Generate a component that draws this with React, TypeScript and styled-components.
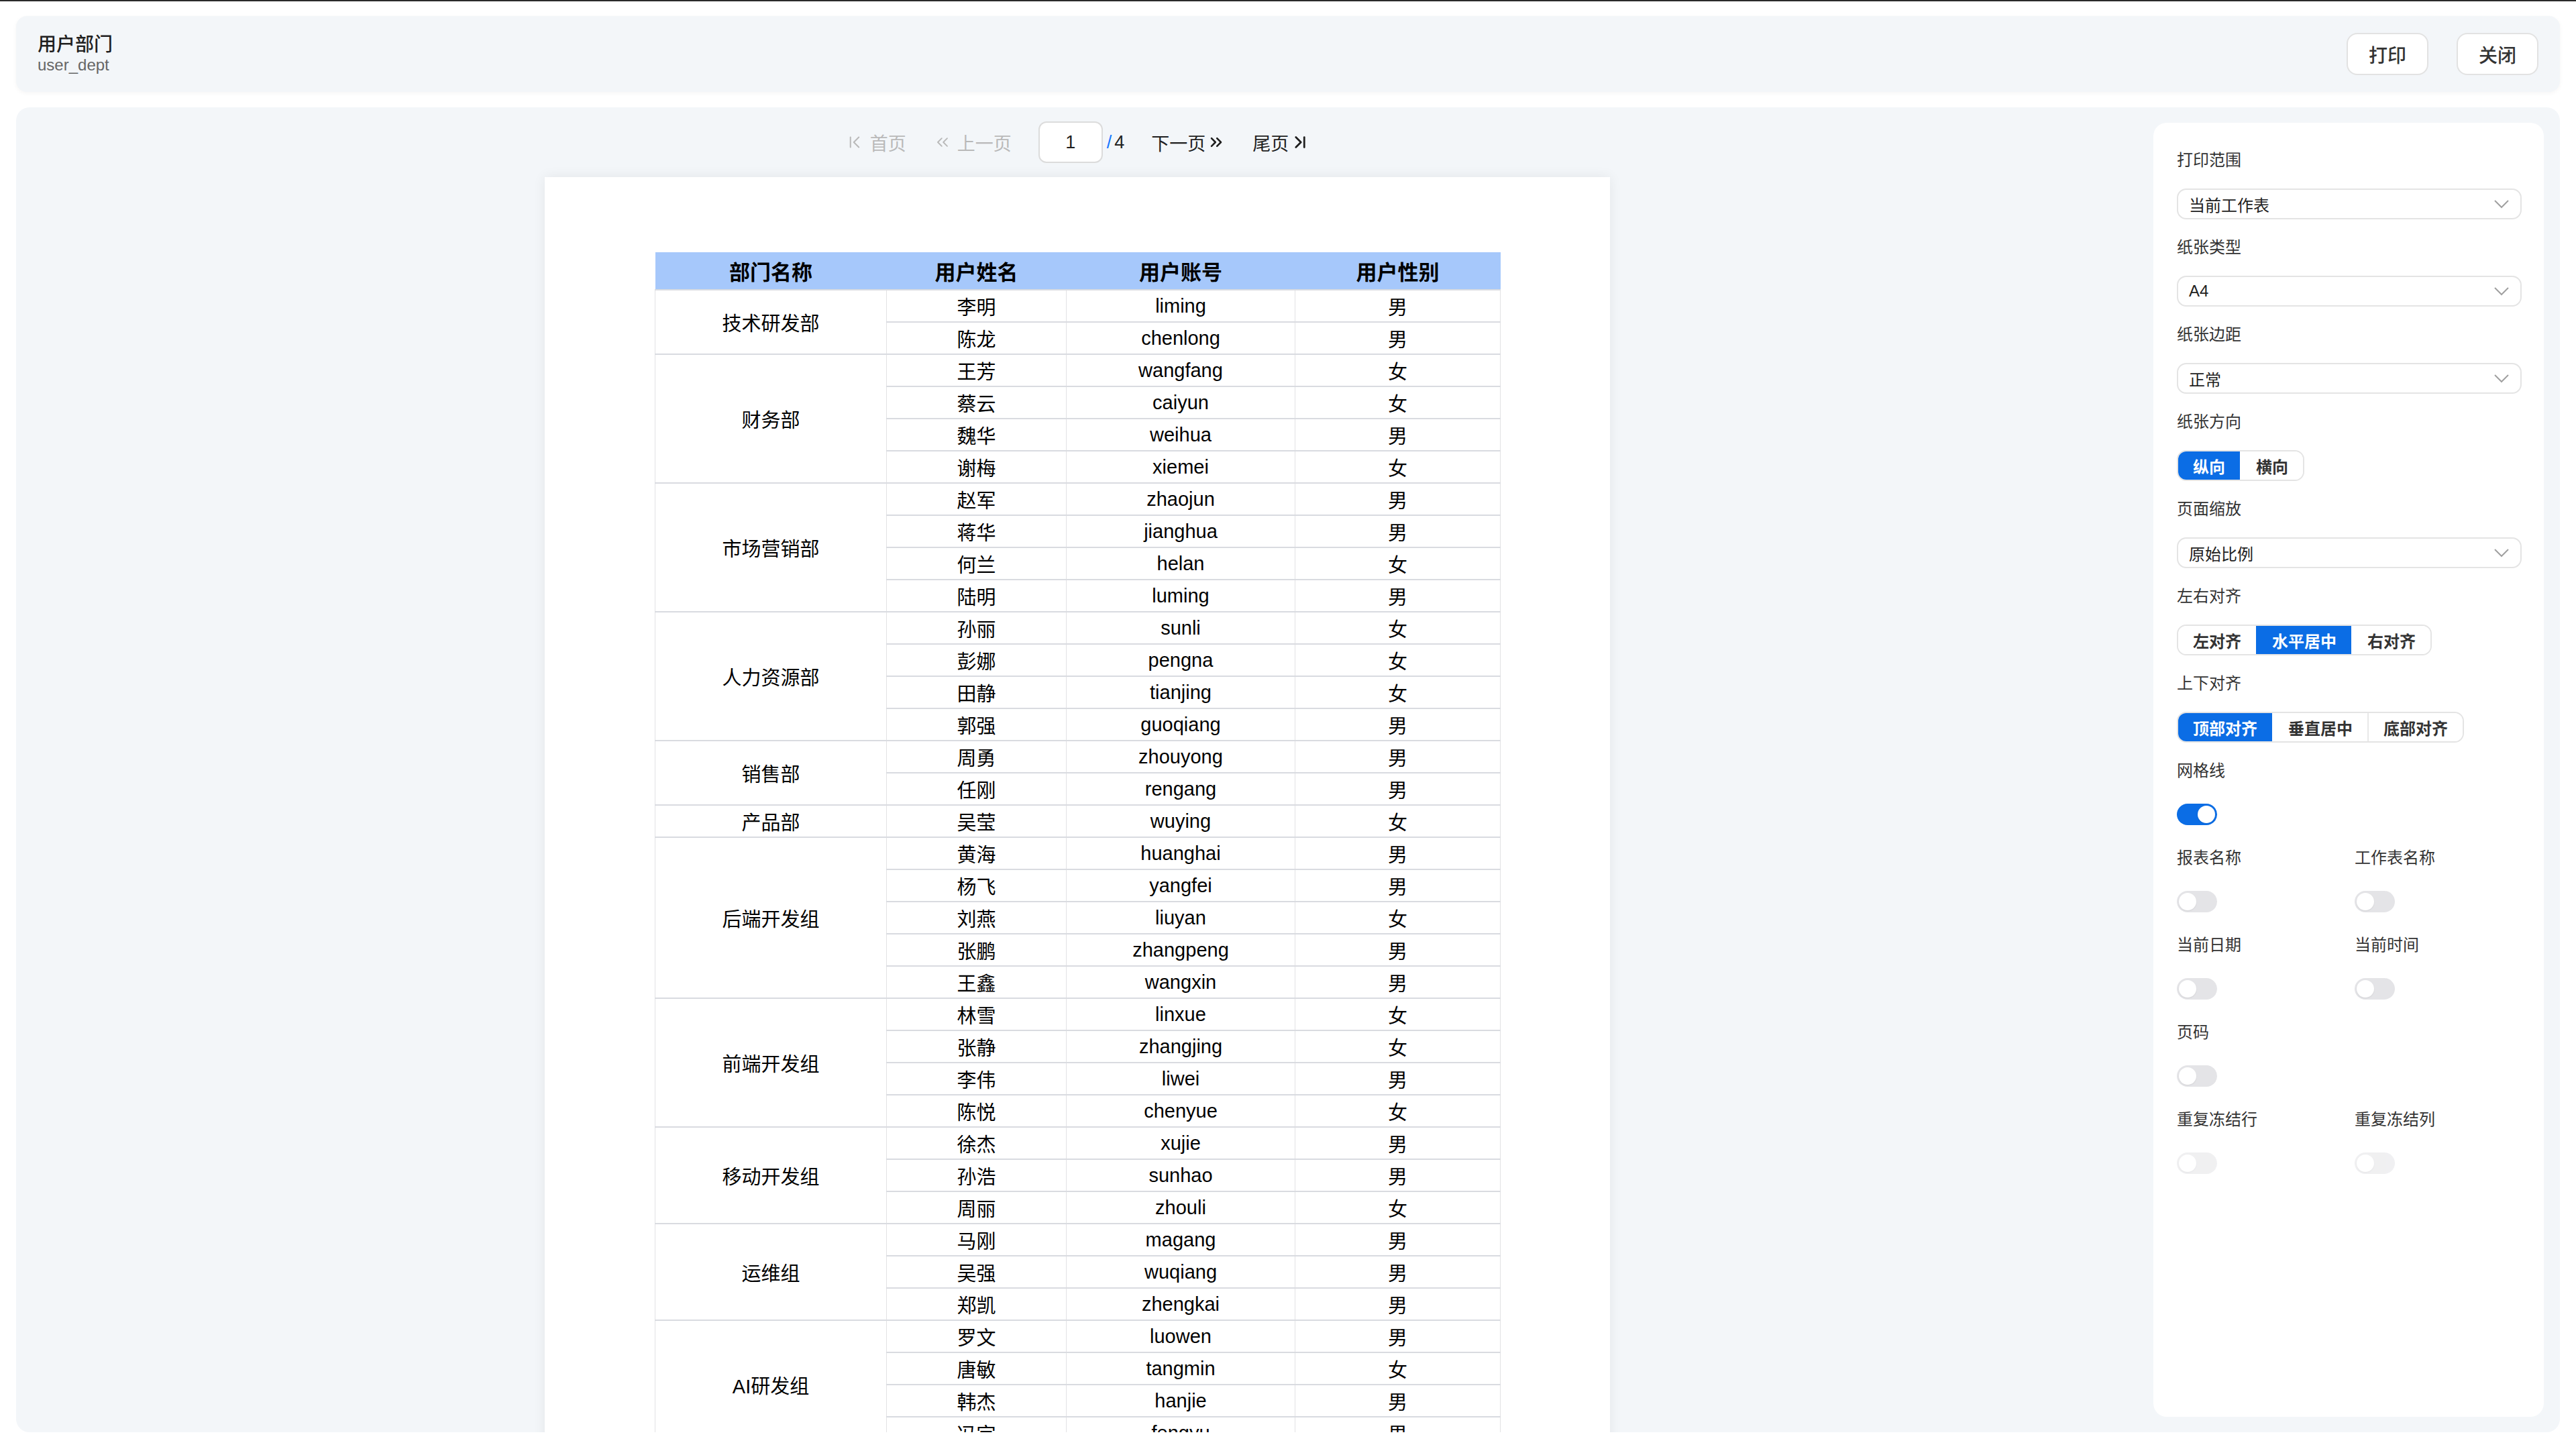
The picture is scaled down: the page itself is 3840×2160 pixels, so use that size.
import React from 'react';
import styled, { createGlobalStyle } from 'styled-components';
import { ChevronFirst, ChevronsLeft, ChevronsRight, ChevronLast } from 'lucide-react';

const GlobalStyle = createGlobalStyle`
  html, body {
    margin: 0;
    padding: 0;
    background: #fff;
  }
  body {
    font-family: "Liberation Sans", "Noto Sans CJK SC", sans-serif;
    color: #222;
  }
  * {
    box-sizing: border-box;
  }
`;

const BLUE = '#0b6de5';

const Page = styled.div`
  height: 2160px;
  border-top: 2px solid #2a2a2a;
  padding: 22px 24px 25px;
  display: flex;
  flex-direction: column;
  gap: 23px;
  overflow: hidden;
`;

const Header = styled.header`
  height: 113px;
  flex-shrink: 0;
  display: flex;
  align-items: center;
  justify-content: space-between;
  padding: 0 32px;
  background: #f3f6f9;
  border-radius: 16px;
  box-shadow: 0 2px 6px rgba(0, 0, 0, 0.04);
`;

const TitleBlock = styled.div`
  display: flex;
  flex-direction: column;
`;

const Title = styled.div`
  font-size: 28px;
  line-height: 33px;
  font-weight: 500;
  color: #1f1f1f;
`;

const SubTitle = styled.div`
  font-size: 24px;
  line-height: 28px;
  color: #666;
`;

const HeaderActions = styled.div`
  display: flex;
  gap: 42px;
`;

const HeaderButton = styled.button`
  height: 63px;
  padding: 0 31px;
  border: 2px solid #e2e2e2;
  border-radius: 16px;
  background: #fff;
  font-family: inherit;
  font-size: 28px;
  font-weight: 500;
  color: #333;
  cursor: pointer;
`;

const Main = styled.main`
  flex: 1;
  min-height: 0;
  display: flex;
  background: #f3f6f9;
  border-radius: 20px;
  overflow: hidden;
`;

const Preview = styled.section`
  flex: 1;
  min-width: 0;
  display: flex;
  flex-direction: column;
  align-items: center;
  overflow: hidden;
`;

const Pager = styled.div`
  display: flex;
  align-items: center;
  gap: 40px;
  padding: 21px 0;
  font-size: 27px;
`;

const PagerLink = styled.span<{ $disabled?: boolean; $tight?: boolean }>`
  display: flex;
  align-items: center;
  gap: ${(p) => (p.$tight ? '2px' : '8px')};
  color: ${(p) => (p.$disabled ? '#b9b9b9' : '#1f1f1f')};
  cursor: ${(p) => (p.$disabled ? 'default' : 'pointer')};
`;

const PageJump = styled.div`
  display: flex;
  align-items: center;
  gap: 6px;
`;

const PageInput = styled.div`
  width: 96px;
  height: 62px;
  border: 2px solid #dcdcdc;
  border-radius: 12px;
  background: #fff;
  display: flex;
  align-items: center;
  justify-content: center;
  color: #1f1f1f;
`;

const Slash = styled.span`
  color: #1677ff;
  margin-right: 4px;
`;

const Paper = styled.div`
  width: 1588px;
  min-height: 2246px;
  flex-shrink: 0;
  background: #fff;
  padding: 112px 164px;
  box-shadow: 0 0 18px rgba(0, 0, 0, 0.07);
`;

const Table = styled.table`
  width: 1260px;
  border-collapse: collapse;
  table-layout: fixed;
  color: #000;
`;

const HeadCell = styled.th`
  height: 56px;
  padding: 0;
  background: #a6c8fb;
  font-size: 31px;
  font-weight: 700;
  text-align: center;
  border-bottom: 2px solid #d9dbe0;
`;

const Row = styled.tr`
  height: 48px;
`;

const Cell = styled.td`
  padding: 0;
  font-size: 29px;
  text-align: center;
  vertical-align: middle;
  border-left: 1px solid #e2e2e4;
  border-right: 1px solid #e2e2e4;
  border-top: 2px solid #d9dbe0;
  border-bottom: 2px solid #d9dbe0;
`;

const Sidebar = styled.aside`
  width: 582px;
  flex-shrink: 0;
  margin: 23px 24px 23px 22px;
  background: #fff;
  border-radius: 20px;
  padding: 38px 33px 0 35px;
`;

const Field = styled.div`
  margin-bottom: 24px;
`;

const Label = styled.div`
  font-size: 24px;
  line-height: 36px;
  margin-bottom: 24px;
  color: #333;
`;

const Select = styled.div`
  height: 46px;
  border: 2px solid #e4e4e4;
  border-radius: 14px;
  padding: 0 16px 0 16px;
  display: flex;
  align-items: center;
  justify-content: space-between;
  font-size: 24px;
  color: #222;
`;

const Segmented = styled.div`
  display: inline-flex;
  height: 46px;
  border: 2px solid #e4e4e4;
  border-radius: 14px;
  overflow: hidden;
`;

const SegItem = styled.div<{ $active?: boolean; $divider?: boolean }>`
  padding: 0 22px;
  display: flex;
  align-items: center;
  font-size: 24px;
  font-weight: 700;
  color: ${(p) => (p.$active ? '#fff' : '#333')};
  background: ${(p) => (p.$active ? BLUE : '#fff')};
  border-left: 2px solid ${(p) => (p.$divider ? '#e8e8e8' : 'transparent')};
  &:first-child {
    border-left: none;
  }
`;

const ToggleGrid = styled.div`
  display: grid;
  grid-template-columns: 1fr 1fr;
  column-gap: 16px;
`;

const ToggleBox = styled.div`
  height: 46px;
  display: flex;
  align-items: center;
`;

const Toggle = styled.div<{ $on?: boolean; $disabled?: boolean }>`
  width: 60px;
  height: 32px;
  border-radius: 16px;
  padding: 3px;
  display: flex;
  justify-content: ${(p) => (p.$on ? 'flex-end' : 'flex-start')};
  background: ${(p) => (p.$on ? BLUE : '#e4e4e7')};
  opacity: ${(p) => (p.$disabled ? 0.55 : 1)};
`;

const Knob = styled.span`
  width: 26px;
  height: 26px;
  border-radius: 50%;
  background: #fff;
  box-shadow: 0 1px 2px rgba(0, 0, 0, 0.08);
`;

const ChevronDown = () => (
  <svg width="24" height="14" viewBox="0 0 24 14" fill="none">
    <polyline points="2,2 12,12 22,2" stroke="#a0a0a0" strokeWidth="2" />
  </svg>
);

type Member = [string, string, string];

const groups: { dept: string; members: Member[] }[] = [
  { dept: '技术研发部', members: [['李明', 'liming', '男'], ['陈龙', 'chenlong', '男']] },
  {
    dept: '财务部',
    members: [['王芳', 'wangfang', '女'], ['蔡云', 'caiyun', '女'], ['魏华', 'weihua', '男'], ['谢梅', 'xiemei', '女']],
  },
  {
    dept: '市场营销部',
    members: [['赵军', 'zhaojun', '男'], ['蒋华', 'jianghua', '男'], ['何兰', 'helan', '女'], ['陆明', 'luming', '男']],
  },
  {
    dept: '人力资源部',
    members: [['孙丽', 'sunli', '女'], ['彭娜', 'pengna', '女'], ['田静', 'tianjing', '女'], ['郭强', 'guoqiang', '男']],
  },
  { dept: '销售部', members: [['周勇', 'zhouyong', '男'], ['任刚', 'rengang', '男']] },
  { dept: '产品部', members: [['吴莹', 'wuying', '女']] },
  {
    dept: '后端开发组',
    members: [
      ['黄海', 'huanghai', '男'],
      ['杨飞', 'yangfei', '男'],
      ['刘燕', 'liuyan', '女'],
      ['张鹏', 'zhangpeng', '男'],
      ['王鑫', 'wangxin', '男'],
    ],
  },
  {
    dept: '前端开发组',
    members: [['林雪', 'linxue', '女'], ['张静', 'zhangjing', '女'], ['李伟', 'liwei', '男'], ['陈悦', 'chenyue', '女']],
  },
  { dept: '移动开发组', members: [['徐杰', 'xujie', '男'], ['孙浩', 'sunhao', '男'], ['周丽', 'zhouli', '女']] },
  { dept: '运维组', members: [['马刚', 'magang', '男'], ['吴强', 'wuqiang', '男'], ['郑凯', 'zhengkai', '男']] },
  {
    dept: 'AI研发组',
    members: [['罗文', 'luowen', '男'], ['唐敏', 'tangmin', '女'], ['韩杰', 'hanjie', '男'], ['冯宇', 'fengyu', '男']],
  },
];

const selects = [
  { label: '打印范围', value: '当前工作表' },
  { label: '纸张类型', value: 'A4' },
  { label: '纸张边距', value: '正常' },
];

const SegField = ({ label, items, active }: { label: string; items: string[]; active: number }) => (
  <Field>
    <Label>{label}</Label>
    <Segmented>
      {items.map((it, i) => (
        <SegItem key={it} $active={i === active} $divider={i > 0 && i !== active && i - 1 !== active}>
          {it}
        </SegItem>
      ))}
    </Segmented>
  </Field>
);

const SwitchField = ({ label, on, disabled }: { label: string; on?: boolean; disabled?: boolean }) => (
  <Field>
    <Label>{label}</Label>
    <ToggleBox>
      <Toggle $on={on} $disabled={disabled}>
        <Knob />
      </Toggle>
    </ToggleBox>
  </Field>
);

const App = () => {
  return (
    <>
      <GlobalStyle />
      <Page>
        <Header>
          <TitleBlock>
            <Title>用户部门</Title>
            <SubTitle>user_dept</SubTitle>
          </TitleBlock>
          <HeaderActions>
            <HeaderButton>打印</HeaderButton>
            <HeaderButton>关闭</HeaderButton>
          </HeaderActions>
        </Header>

        <Main>
          <Preview>
            <Pager>
              <PagerLink $disabled>
                <ChevronFirst size={30} strokeWidth={1.6} />
                首页
              </PagerLink>
              <PagerLink $disabled>
                <ChevronsLeft size={28} strokeWidth={1.6} />
                上一页
              </PagerLink>
              <PageJump>
                <PageInput>1</PageInput>
                <span>
                  <Slash>/</Slash>4
                </span>
              </PageJump>
              <PagerLink $tight>
                下一页
                <ChevronsRight size={28} strokeWidth={2.2} />
              </PagerLink>
              <PagerLink $tight>
                尾页
                <ChevronLast size={30} strokeWidth={2.2} />
              </PagerLink>
            </Pager>

            <Paper>
              <Table>
                <colgroup>
                  <col style={{ width: 345 }} />
                  <col style={{ width: 268 }} />
                  <col style={{ width: 341 }} />
                  <col style={{ width: 306 }} />
                </colgroup>
                <thead>
                  <tr>
                    <HeadCell>部门名称</HeadCell>
                    <HeadCell>用户姓名</HeadCell>
                    <HeadCell>用户账号</HeadCell>
                    <HeadCell>用户性别</HeadCell>
                  </tr>
                </thead>
                <tbody>
                  {groups.map((g) =>
                    g.members.map((m, i) => (
                      <Row key={g.dept + m[1]}>
                        {i === 0 && <Cell rowSpan={g.members.length}>{g.dept}</Cell>}
                        <Cell>{m[0]}</Cell>
                        <Cell>{m[1]}</Cell>
                        <Cell>{m[2]}</Cell>
                      </Row>
                    ))
                  )}
                </tbody>
              </Table>
            </Paper>
          </Preview>

          <Sidebar>
            {selects.map((s) => (
              <Field key={s.label}>
                <Label>{s.label}</Label>
                <Select>
                  {s.value}
                  <ChevronDown />
                </Select>
              </Field>
            ))}
            <SegField label="纸张方向" items={['纵向', '横向']} active={0} />
            <Field>
              <Label>页面缩放</Label>
              <Select>
                原始比例
                <ChevronDown />
              </Select>
            </Field>
            <SegField label="左右对齐" items={['左对齐', '水平居中', '右对齐']} active={1} />
            <SegField label="上下对齐" items={['顶部对齐', '垂直居中', '底部对齐']} active={0} />
            <SwitchField label="网格线" on />
            <ToggleGrid>
              <SwitchField label="报表名称" />
              <SwitchField label="工作表名称" />
              <SwitchField label="当前日期" />
              <SwitchField label="当前时间" />
              <SwitchField label="页码" />
              <div />
              <SwitchField label="重复冻结行" disabled />
              <SwitchField label="重复冻结列" disabled />
            </ToggleGrid>
          </Sidebar>
        </Main>
      </Page>
    </>
  );
};

export default App;
